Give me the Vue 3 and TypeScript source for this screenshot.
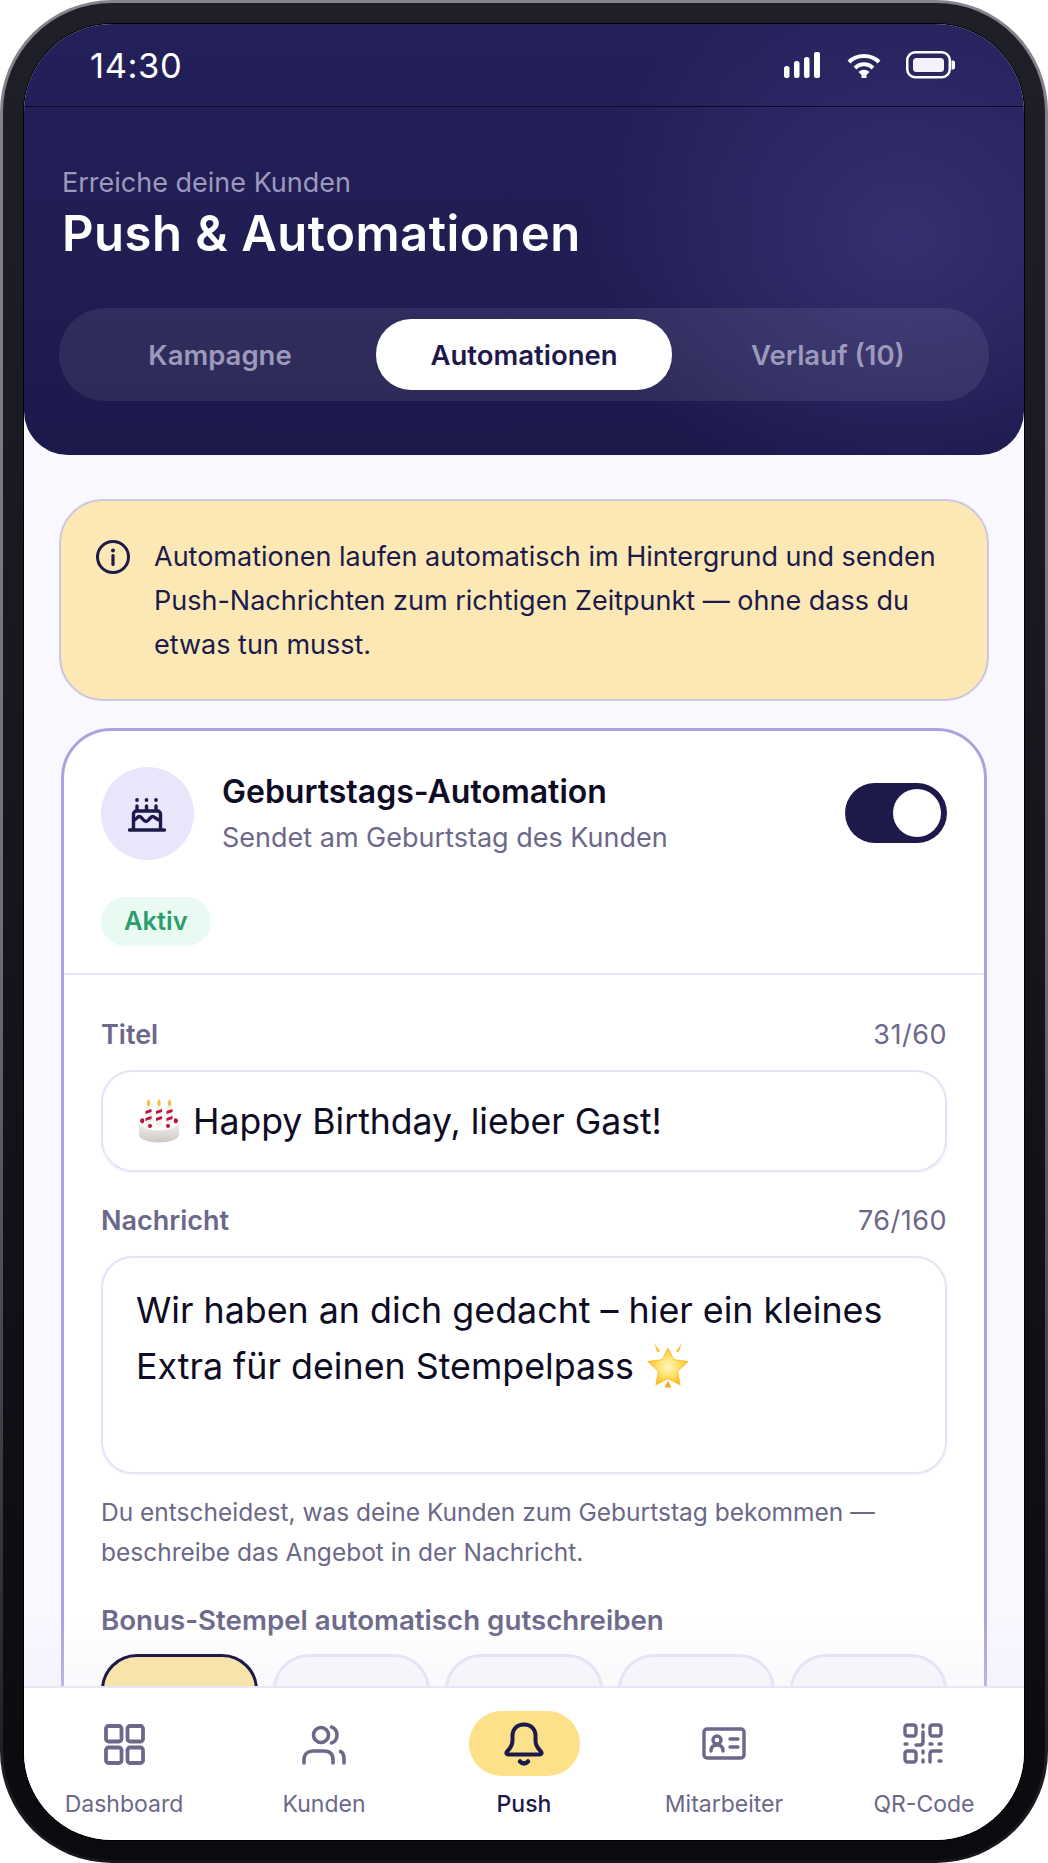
<script setup lang="ts">
import { ref } from 'vue'

const tabs = ['Kampagne', 'Automationen', 'Verlauf (10)']
const activeTab = ref('Automationen')
const bonusOptions = [0, 1, 2, 3, 4]
const selectedBonus = ref(0)
const enabled = ref(true)
const activeNav = ref('Push')
const navItems = ['Dashboard', 'Kunden', 'Push', 'Mitarbeiter', 'QR-Code']
</script>

<template>
  <div class="phone">
    <div class="bezel">
      <div class="screen">
        <div class="top">
          <div class="status-bar">
            <span class="time">14:30</span>
            <div class="status-icons">
              <svg width="38" height="28" viewBox="0 0 38 28" fill="#fff">
                <rect x="0" y="15" width="5.500" height="12" rx="2.500" />
                <rect x="10" y="10" width="5.500" height="17" rx="2.500" />
                <rect x="20" y="6" width="5.500" height="21" rx="2.500" />
                <rect x="30" y="1" width="6" height="26" rx="2" />
              </svg>
              <svg width="34" height="28" viewBox="0 0 34 28" fill="none" stroke="#fff" stroke-width="4">
                <path d="M2 11C10 3 24 3 32 11" />
                <path d="M8 17C13 12 21 12 26 17" />
                <path d="M11.500 21C15 18 19 18 22.500 21L19.500 24V27H14.500V24Z" fill="#fff" stroke="none" />
              </svg>
              <svg width="50" height="28" viewBox="0 0 50 28" fill="none">
                <rect x="1.250" y="1.250" width="42.500" height="25" rx="8" stroke="#fff" stroke-width="2.500" />
                <rect x="7" y="7" width="31" height="14" rx="3.500" fill="#f4f2fb" />
                <path d="M45.500 9.500h1.500a2 2 0 0 1 2 2v5a2 2 0 0 1-2 2h-1.500z" fill="#fff" />
              </svg>
            </div>
          </div>
          <header class="header">
            <p class="eyebrow">Erreiche deine Kunden</p>
            <h1 class="title">Push &amp; Automationen</h1>
            <div class="tabs">
              <button
                v-for="tab in tabs"
                :key="tab"
                class="tab"
                :class="{ active: tab === activeTab }"
                @click="activeTab = tab"
              >
                {{ tab }}
              </button>
            </div>
          </header>
        </div>

        <main class="content">
          <div class="notice">
            <svg class="notice-icon" width="36" height="36" viewBox="0 0 36 36" fill="none">
              <circle cx="18" cy="18" r="15.500" stroke="#1d1a4b" stroke-width="3" />
              <circle cx="18" cy="11.500" r="2" fill="#1d1a4b" />
              <path d="M18 16.500v9" stroke="#1d1a4b" stroke-width="3.200" stroke-linecap="round" />
            </svg>
            <p>Automationen laufen automatisch im Hintergrund und senden Push-Nachrichten zum richtigen Zeitpunkt — ohne dass du etwas tun musst.</p>
          </div>

          <section class="card">
            <div class="card-head">
              <div class="avatar">
                <svg width="40" height="40" viewBox="0 0 40 40" fill="none" stroke="#1d1a4b" stroke-width="3.400" stroke-linecap="round" stroke-linejoin="round">
                  <circle cx="9" cy="6" r="1.900" fill="#1d1a4b" stroke="none" />
                  <circle cx="18.500" cy="6" r="1.900" fill="#1d1a4b" stroke="none" />
                  <circle cx="28" cy="6" r="1.900" fill="#1d1a4b" stroke="none" />
                  <path d="M9 12v4M18.500 12v4M28 12v4" />
                  <path d="M5.500 35V20a3 3 0 0 1 3-3h21a3 3 0 0 1 3 3v15" />
                  <path d="M5.500 26c3 0 3.500-3.500 6-3.500s3.500 5 6.500 5 4-5 6.500-5 3.500 3.500 8 3.500" />
                  <path d="M1.500 36h35" />
                </svg>
              </div>
              <div class="head-text">
                <h2>Geburtstags-Automation</h2>
                <p>Sendet am Geburtstag des Kunden</p>
              </div>
              <button class="toggle" :class="{ on: enabled }" @click="enabled = !enabled">
                <span class="knob"></span>
              </button>
            </div>
            <span class="badge">Aktiv</span>
            <div class="divider"></div>

            <div class="form">
              <div class="field-label">
                <span>Titel</span>
                <span class="count">31/60</span>
              </div>
              <div class="input">
                <svg class="emoji" width="44" height="44" viewBox="0 0 44 44">
                  <defs>
                    <linearGradient id="cakeSide" x1="0" y1="0" x2="0" y2="1">
                      <stop offset="0" stop-color="#f7f4f2" />
                      <stop offset="1" stop-color="#cfc8c2" />
                    </linearGradient>
                  </defs>
                  <path d="M2 22h40v14c0 4-9 7.500-20 7.500S2 40 2 36z" fill="url(#cakeSide)" />
                  <ellipse cx="22" cy="22" rx="20" ry="9.500" fill="#fffdfc" />
                  <rect x="8.500" y="7" width="6" height="18" rx="2" fill="#f3eff0" />
                  <rect x="19" y="7" width="6" height="20" rx="2" fill="#f3eff0" />
                  <rect x="29.500" y="7" width="6" height="18" rx="2" fill="#f3eff0" />
                  <path d="M8.500 12l6-2v3l-6 2zM19 12l6-2v3l-6 2zM29.500 12l6-2v3l-6 2zM8.500 19l6-2v3l-6 2zM19 19l6-2v3l-6 2zM29.500 19l6-2v3l-6 2z" fill="#b5173f" />
                  <path d="M11.500 0c2 3 2.500 6 0 7.500C9 6 9.500 3 11.500 0zM22 0c2 3 2.500 6 0 7.500C19.500 6 20 3 22 0zM32.500 0c2 3 2.500 6 0 7.500C30 6 30.500 3 32.500 0z" fill="#f2bf45" />
                  <path d="M3 21c1.500-2 3-2 4-1 .5 2 .5 4-1.500 4.500C4 24.500 3 23 3 21zM41 21c-1.500-2-3-2-4-1-.5 2-.5 4 1.500 4.500C40 24.500 41 23 41 21zM11 26c1-1.500 3-1.500 4 0 0 2-.5 3-2 3s-2-1-2-3zM29 26c1-1.500 3-1.500 4 0 0 2-.5 3-2 3s-2-1-2-3z" fill="#b5173f" />
                </svg>
                <span>Happy Birthday, lieber Gast!</span>
              </div>

              <div class="field-label second">
                <span>Nachricht</span>
                <span class="count">76/160</span>
              </div>
              <div class="textarea">
                Wir haben an dich gedacht – hier ein kleines Extra für deinen Stempelpass
                <svg class="emoji star" width="42" height="45" viewBox="0 0 42 45">
                  <defs>
                    <radialGradient id="starFill" cx="0.5" cy="0.5" r="0.55">
                      <stop offset="0" stop-color="#fff6c4" />
                      <stop offset="0.5" stop-color="#ffe067" />
                      <stop offset="1" stop-color="#fbb313" />
                    </radialGradient>
                  </defs>
                  <path d="M21 5l5.700 11.600 14.300 2-10.400 9.900 2.500 13.500L21 35.500 8.900 42l2.500-13.500L1 18.600l14.300-2z" fill="url(#starFill)" stroke="#fbc02d" stroke-width="1" stroke-linejoin="round" />
                  <path d="M7 0l6 8-2.500 1.500zM35 0l-6 8 2.500 1.500z" fill="#fbc02d" />
                  <path d="M21 37.500l3.500 7h-7z" fill="#f9a825" />
                </svg>
              </div>
              <p class="helper">Du entscheidest, was deine Kunden zum Geburtstag bekommen — beschreibe das Angebot in der Nachricht.</p>

              <div class="bonus-label">Bonus-Stempel automatisch gutschreiben</div>
              <div class="chips">
                <button
                  v-for="n in bonusOptions"
                  :key="n"
                  class="chip"
                  :class="{ selected: n === selectedBonus }"
                  @click="selectedBonus = n"
                ></button>
              </div>
            </div>
          </section>
          <div class="fade"></div>
        </main>

        <nav class="nav">
          <button
            v-for="item in navItems"
            :key="item"
            class="nav-item"
            :class="{ active: item === activeNav }"
            @click="activeNav = item"
          >
            <span class="nav-icon">
              <svg v-if="item === 'Dashboard'" width="44" height="44" viewBox="0 0 44 44" fill="none" stroke="currentColor" stroke-width="3.800" stroke-linejoin="round">
                <rect x="4" y="4" width="15.500" height="15.500" rx="2.500" />
                <rect x="25.500" y="4" width="15.500" height="15.500" rx="2.500" />
                <rect x="4" y="25.500" width="15.500" height="15.500" rx="2.500" />
                <rect x="25.500" y="25.500" width="15.500" height="15.500" rx="2.500" />
              </svg>
              <svg v-else-if="item === 'Kunden'" width="46" height="44" viewBox="0 0 46 44" fill="none" stroke="currentColor" stroke-width="3.600" stroke-linecap="round">
                <circle cx="20" cy="13" r="7.500" />
                <path d="M3 41v-3c0-6 4-9 9-9h11c6 0 9 3 9 9v3" />
                <path d="M30.500 5c3.500 1 5.500 4.500 5.500 8s-2 7-5.500 8" />
                <path d="M39.500 29.500c2.500 1 3.500 4 3.500 8V41" />
              </svg>
              <svg v-else-if="item === 'Push'" width="44" height="46" viewBox="0 0 44 46" fill="none" stroke="#1d1a4b" stroke-width="4" stroke-linecap="round" stroke-linejoin="round">
                <path d="M22 3.500c-7 0-11.500 4.500-11.500 11v5c0 5-2 7.500-5 10.500-2 2-1 3.500 1 3.500h31c2 0 3-1.500 1-3.500-3-3-5-5.500-5-10.500v-5c0-6.500-4.500-11-11.500-11z" />
                <path d="M18 40.500c2.500 2.500 5.500 2.500 8 0" stroke-width="4.500" />
              </svg>
              <svg v-else-if="item === 'Mitarbeiter'" width="44" height="34" viewBox="0 0 44 34" fill="none" stroke="currentColor" stroke-width="3.400" stroke-linecap="round" stroke-linejoin="round">
                <rect x="2" y="2" width="40" height="29" rx="3" />
                <circle cx="15" cy="13" r="4" />
                <path d="M9 24c0-4 2.500-6 6-6s6 2 6 6" />
                <path d="M28 12h8M28 20h8" />
              </svg>
              <svg v-else width="42" height="42" viewBox="0 0 42 42" fill="none" stroke="currentColor" stroke-width="3.400" stroke-linecap="round" stroke-linejoin="round">
                <rect x="2" y="2" width="11" height="11" rx="2.500" />
                <rect x="27" y="2" width="11" height="11" rx="2.500" />
                <rect x="2" y="28" width="11" height="11" rx="2.500" />
                <path d="M20 2v2M20 9v10c0 2-1 3-3 3h-4M2 21h2M27 21h2M36 21h2M20 28v2M20 37v2M27 39v-8c0-2 1-3 3-3h8M36 38h2" />
              </svg>
            </span>
            <span class="nav-label">{{ item }}</span>
          </button>
        </nav>
      </div>
    </div>
  </div>
</template>

<style>
html,
body {
  margin: 0;
  background: #fff;
}
</style>

<style scoped>
* {
  box-sizing: border-box;
}

button {
  font: inherit;
  border: none;
  background: none;
  padding: 0;
}

.phone {
  width: 1048px;
  height: 1863px;
  padding: 3px;
  border-radius: 112px;
  background: linear-gradient(180deg, #85858d 0%, #6e6e76 50%, #3a3a42 80%, #15151b 100%);
  font-family: Inter, "Noto Sans", sans-serif;
  overflow: hidden;
}

.bezel {
  height: 100%;
  padding: 21px 21px 20px;
  border-radius: 109px;
  background: linear-gradient(180deg, #1f1f28 0%, #0a0a0f 100%);
}

.screen {
  height: 100%;
  border-radius: 88px;
  overflow: hidden;
  display: flex;
  flex-direction: column;
  background: #f9f8ff;
  box-shadow: 0 0 0 1px #000;
}

.top {
  flex: none;
  height: 431px;
  border-radius: 0 0 44px 44px;
  background:
    radial-gradient(ellipse 320px 280px at 880px 210px, #35306f 0%, rgba(53, 48, 111, 0) 100%),
    linear-gradient(180deg, #23205a 0%, #201d52 60%, #1b184a 100%);
  overflow: hidden;
}

.status-bar {
  height: 83px;
  border-bottom: 1px solid #0d0b2a;
  display: flex;
  align-items: center;
  justify-content: space-between;
  padding: 0 68px 0 66px;
}

.time {
  color: #fff;
  font-size: 34.500px;
  font-weight: 400;
  letter-spacing: 0.6px;
}

.status-icons {
  display: flex;
  align-items: center;
  gap: 25px;
}

.status-icons svg {
  display: block;
}

.header {
  padding: 61px 35px 0 38px;
}

.eyebrow {
  margin: 0;
  color: #9c99bd;
  font-size: 27px;
  line-height: 30px;
}

.title {
  margin: 7px 0 0;
  color: #fff;
  font-size: 49px;
  font-weight: 600;
  line-height: 58px;
  letter-spacing: 0.5px;
}

.tabs {
  margin: 45px 0 0 -3px;
  height: 93px;
  padding: 11px;
  border-radius: 47px;
  background: rgba(255, 255, 255, 0.08);
  display: flex;
  justify-content: space-between;
  gap: 6px;
}

.tab {
  flex: 1;
  border-radius: 35px;
  color: #9c99bd;
  font-size: 27.500px;
  font-weight: 600;
}

.tab.active {
  background: #fff;
  color: #1d1a4b;
  flex: none;
  width: 296px;
}

.content {
  flex: 1;
  min-height: 0;
  padding: 44px 35px 0;
  overflow: hidden;
  position: relative;
}

.notice {
  display: flex;
  align-items: flex-start;
  gap: 23px;
  height: 202px;
  padding: 34px 30px 0 34px;
  border: 2px solid #cbc5e8;
  border-radius: 44px;
  background: #fbe8b5;
}

.notice-icon {
  flex: none;
  margin-top: 4px;
}

.notice p {
  margin: 0;
  color: #1d1a4b;
  font-size: 27px;
  line-height: 44px;
}

.card {
  margin: 27px 2px 0;
  padding-bottom: 40px;
  border: 3px solid #aaa4dd;
  border-radius: 50px;
  background: #fff;
}

.card-head {
  display: flex;
  align-items: flex-start;
  padding: 36px 37px 0;
}

.avatar {
  flex: none;
  width: 93px;
  height: 93px;
  border-radius: 50%;
  background: #e9e5fb;
  display: flex;
  align-items: center;
  justify-content: center;
}

.head-text {
  flex: 1;
  margin-left: 28px;
  padding-top: 4px;
}

.head-text h2 {
  margin: 0;
  color: #0e0c24;
  font-size: 32px;
  font-weight: 600;
  line-height: 42px;
}

.head-text p {
  margin: 5px 0 0;
  color: #6b6889;
  font-size: 27px;
  line-height: 40px;
}

.toggle {
  flex: none;
  width: 102px;
  height: 60px;
  margin-top: 16px;
  padding: 6px;
  border-radius: 30px;
  background: #d9d7ea;
  display: flex;
  justify-content: flex-start;
}

.toggle.on {
  background: #1d1a4b;
  justify-content: flex-end;
}

.knob {
  width: 48px;
  height: 48px;
  border-radius: 50%;
  background: #fff;
}

.badge {
  display: inline-block;
  margin: 37px 0 0 37px;
  padding: 0 23px;
  height: 49px;
  line-height: 47px;
  border-radius: 25px;
  background: #e9faf2;
  color: #2a9d6e;
  font-size: 25.500px;
  font-weight: 600;
}

.divider {
  height: 2px;
  margin-top: 27px;
  background: #e8e6f2;
}

.form {
  padding: 44px 37px 0;
}

.field-label {
  display: flex;
  justify-content: space-between;
  align-items: center;
  height: 30px;
  color: #6b6889;
  font-size: 27px;
  font-weight: 600;
}

.field-label.second {
  margin-top: 33px;
}

.count {
  font-weight: 400;
  font-size: 27px;
  letter-spacing: 0.5px;
}

.input,
.textarea {
  margin-top: 21px;
  border: 2px solid #e5e3f5;
  border-radius: 32px;
  background: #fff;
  color: #0e0c24;
  box-shadow: 0 1px 3px rgba(100, 90, 200, 0.08);
}

.input {
  height: 102px;
  padding: 0 34px;
  display: flex;
  align-items: center;
  gap: 12px;
  font-size: 35.600px;
}

.textarea {
  height: 218px;
  padding: 24px 33px 0;
  font-size: 35.800px;
  line-height: 56px;
}

.emoji {
  flex: none;
}

.star {
  margin-left: 3px;
  vertical-align: -9px;
}

.helper {
  margin: 18px 0 0;
  color: #6b6889;
  font-size: 24.500px;
  line-height: 40px;
}

.bonus-label {
  margin-top: 32px;
  height: 32px;
  line-height: 32px;
  color: #6b6889;
  font-size: 27.700px;
  font-weight: 600;
}

.chips {
  margin-top: 18px;
  display: flex;
  gap: 15px;
}

.chip {
  flex: 1;
  height: 100px;
  border: 3px solid #e5e3f5;
  border-radius: 36px;
  background: #faf9fd;
}

.chip.selected {
  position: relative;
  z-index: 1;
  border-color: #1d1a4b;
  background: #f8e4aa;
}

.fade {
  position: absolute;
  left: 0;
  right: 0;
  bottom: 0;
  height: 70px;
  background: linear-gradient(180deg, rgba(232, 230, 244, 0) 0%, rgba(232, 230, 244, 0.25) 100%);
  pointer-events: none;
}

.nav {
  flex: none;
  height: 154px;
  border-top: 2px solid #e8e6f4;
  background: #fff;
  display: grid;
  grid-template-columns: repeat(5, 1fr);
}

.nav-item {
  display: flex;
  flex-direction: column;
  align-items: center;
  padding-top: 23px;
  color: #6b6889;
}

.nav-icon {
  width: 111px;
  height: 65px;
  border-radius: 33px;
  display: flex;
  align-items: center;
  justify-content: center;
}

.nav-item.active .nav-icon {
  background: #fde08a;
}

.nav-label {
  margin-top: 13px;
  font-size: 23px;
  line-height: 30px;
}

.nav-item.active .nav-label {
  color: #1d1a4b;
  font-weight: 500;
}
</style>
